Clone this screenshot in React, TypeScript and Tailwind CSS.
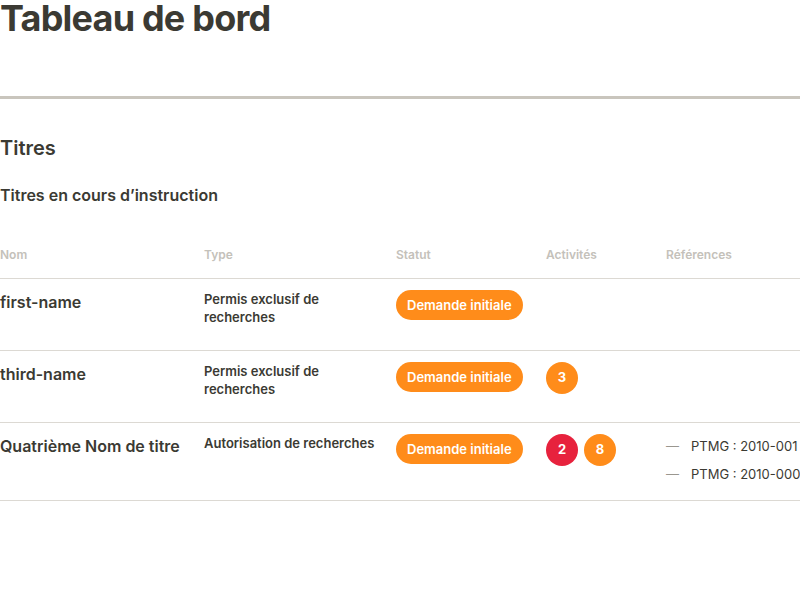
import React from 'react';

type Row = {
  nom: string;
  type: string;
  activites: { n: number; color: string }[];
  refs: string[];
};

const rows: Row[] = [
  { nom: 'first-name', type: 'Permis exclusif de recherches', activites: [], refs: [] },
  {
    nom: 'third-name',
    type: 'Permis exclusif de recherches',
    activites: [{ n: 3, color: 'bg-[#ff8c1a]' }],
    refs: [],
  },
  {
    nom: 'Quatrième Nom de titre',
    type: 'Autorisation de recherches',
    activites: [
      { n: 2, color: 'bg-[#e7223d]' },
      { n: 8, color: 'bg-[#ff8c1a]' },
    ],
    refs: ['PTMG : 2010-001', 'PTMG : 2010-000'],
  },
];

export default function App() {
  return (
    <div className="min-h-screen bg-white text-[#3b3a33] font-['Inter',sans-serif] overflow-hidden">
      <h1 className="text-[36px] leading-[36px] font-bold tracking-[-0.8px]">Tableau de bord</h1>

      <div className="mt-[60px] h-[3px] bg-[#c9c5bd]" />

      <h2 className="mt-[37px] text-[20px] leading-[24px] font-semibold">Titres</h2>
      <h3 className="mt-[24px] text-[16px] leading-[22px] font-semibold">Titres en cours d’instruction</h3>

      <table className="mt-[36px] w-[820px] table-fixed border-collapse">
        <colgroup>
          <col className="w-[192px]" />
          <col className="w-[192px]" />
          <col className="w-[150px]" />
          <col className="w-[120px]" />
          <col />
        </colgroup>
        <thead>
          <tr className="border-b border-[#dcd9d3] text-left text-[12px] font-semibold text-[#c4c1ba]">
            <th className="pl-0 pr-3 pt-[4px] pb-[14px] font-semibold">Nom</th>
            <th className="pl-3 pr-1 pt-[4px] pb-[14px] font-semibold">Type</th>
            <th className="px-3 pt-[4px] pb-[14px] font-semibold">Statut</th>
            <th className="px-3 pt-[4px] pb-[14px] font-semibold">Activités</th>
            <th className="px-3 pt-[4px] pb-[14px] font-semibold">Références</th>
          </tr>
        </thead>
        <tbody>
          {rows.map((r) => (
            <tr key={r.nom} className="border-b border-[#dcd9d3] align-top">
              <td className="pl-0 pr-3 pt-[12px] pb-[18px] h-[72px] text-[16px] leading-[22px] font-semibold">
                {r.nom}
              </td>
              <td className="pl-3 pr-1 pt-[11px] pb-[18px] text-[13px] leading-[18px] font-semibold">{r.type}</td>
              <td className="px-3 pt-[11px] pb-[18px]">
                <span className="inline-flex h-[30px] items-center rounded-full bg-[#ff8c1a] px-[11px] pt-[1px] text-[13px] font-semibold text-white whitespace-nowrap">
                  Demande initiale
                </span>
              </td>
              <td className="px-3 pt-[11px] pb-[18px]">
                <div className="flex gap-[6px]">
                  {r.activites.map((a, i) => (
                    <span
                      key={i}
                      className={`flex h-[32px] w-[32px] items-center justify-center rounded-full text-[13px] font-bold text-white ${a.color}`}
                    >
                      {a.n}
                    </span>
                  ))}
                </div>
              </td>
              <td className="px-3 pt-[14px] pb-[17px]">
                <ul className="flex flex-col gap-[10px]">
                  {r.refs.map((ref) => (
                    <li key={ref} className="flex items-center gap-[12px] text-[13px] leading-[18px] whitespace-nowrap">
                      <span className="text-[#9a978f]">—</span>
                      <span>{ref}</span>
                    </li>
                  ))}
                </ul>
              </td>
            </tr>
          ))}
        </tbody>
      </table>
    </div>
  );
}
